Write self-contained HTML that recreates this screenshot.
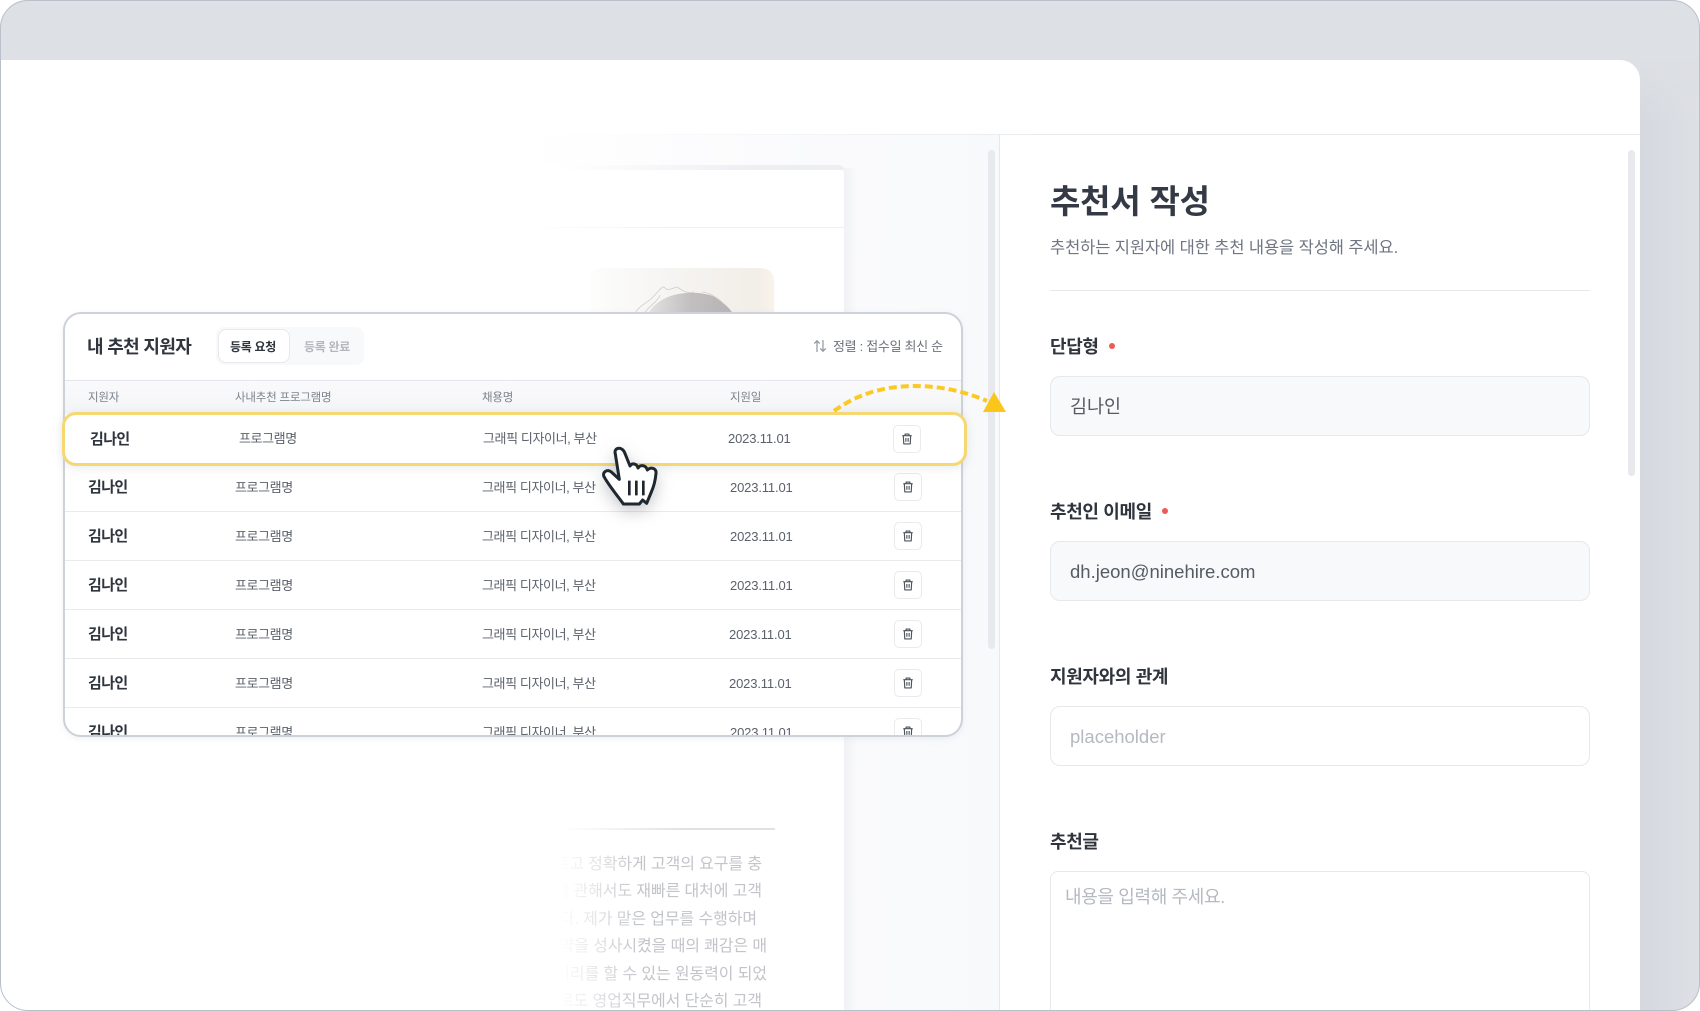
<!DOCTYPE html>
<html lang="ko">
<head>
<meta charset="utf-8">
<title>추천서 작성</title>
<style>
*{box-sizing:border-box;margin:0;padding:0}
html,body{width:1700px;height:1011px;overflow:hidden;background:#fff;font-family:"Liberation Sans","Noto Sans CJK KR",sans-serif}
#root{position:absolute;left:0;top:0;width:1700px;height:1011px;overflow:hidden}
.a{position:absolute;white-space:nowrap}
#frame{position:absolute;left:0;top:0;width:1700px;height:1011px;background:#dde0e5;border-radius:28px;overflow:hidden}
#panel{position:absolute;left:1px;top:60px;width:1639px;height:960px;background:#fff;border-top-right-radius:20px}
#strip{position:absolute;left:1640px;top:60px;width:60px;height:951px;background:linear-gradient(to right,#d5d9df,#dde0e5 60px);-webkit-mask-image:linear-gradient(to bottom,transparent 0,#000 60px);mask-image:linear-gradient(to bottom,transparent 0,#000 60px)}
#outline{position:absolute;left:0;top:0;width:1700px;height:1011px;border:1px solid #b9c0ca;border-radius:28px;z-index:50}
.t{position:absolute;white-space:nowrap;line-height:20px;height:20px}
.n{font-size:15px;font-weight:700;color:#2f343d;letter-spacing:-.6px}
.p{font-size:13px;color:#5b616b;letter-spacing:-.4px}
.d{font-size:13px;color:#5b616b;letter-spacing:-.15px}
.h{font-size:11.5px;color:#7c828c;letter-spacing:-.2px}
.line{position:absolute;left:0;width:100%;height:1px;background:#e8eaed}
.btn{position:absolute;width:28px;height:28px;background:#fff;border:1px solid #e8eaee;border-radius:5px;display:flex;align-items:center;justify-content:center}
.lab{position:absolute;left:1050px;white-space:nowrap;font-size:18px;font-weight:700;color:#2f343d;line-height:24px;letter-spacing:-.35px}
.dot{position:absolute;width:6px;height:6px;border-radius:50%;background:#ec5a55}
.inp{position:absolute;left:1050px;width:540px;height:60px;border:1px solid #e6e8ec;border-radius:10px;font-size:18.5px;line-height:60px;padding-left:19px;white-space:nowrap}
.fade{position:absolute;white-space:nowrap;font-size:16px;line-height:22px;color:#c2c4c9;text-align:right;letter-spacing:-.1px}
</style>
</head>
<body>
<svg width="0" height="0" style="position:absolute"><symbol id="tr" viewBox="0 0 16 16"><path d="M2.6 4.2h10.8M5.8 4.2V2.4h4.4v1.8M3.8 4.2l.5 9.4h7.4l.5-9.4M6.7 6.8v4.4M9.3 6.8v4.4" fill="none" stroke="#4c525c" stroke-width="1.3" stroke-linejoin="round"/></symbol></svg>
<div id="root">
<div id="frame">
<div id="strip"></div>
<div id="panel"></div>
</div>

<!-- left background -->
<div class="a" style="left:520px;top:135px;width:480px;height:876px;background:linear-gradient(to right,#fff 0,#fbfbfd 50%,#f8f9fb 100%)"></div>
<div class="a" style="left:560px;top:134px;width:1080px;height:1px;background:linear-gradient(to right,#fff,#e8eaed 45%)"></div>

<!-- faded document behind -->
<div class="a" style="left:400px;top:165px;width:444px;height:846px;background:linear-gradient(to right,rgba(255,255,255,0),#fff 120px);border-top-right-radius:12px"></div>
<div class="a" style="left:844px;top:168px;width:14px;height:843px;background:linear-gradient(to right,#f1f2f5,rgba(248,249,251,0))"></div>
<div class="a" style="left:560px;top:165px;width:284px;height:5px;background:linear-gradient(to right,#fff,#eceef2 70%);border-top-right-radius:12px"></div>
<div class="a" style="left:520px;top:227px;width:324px;height:1px;background:linear-gradient(to right,#fff,#eef0f3 50%)"></div>

<!-- photo -->
<svg class="a" style="left:590px;top:268px" width="184" height="46" viewBox="0 0 184 46">
<defs><linearGradient id="ph" x1="0" x2="1" y1="0" y2="0"><stop offset="0" stop-color="#fdfdfc"/><stop offset=".4" stop-color="#f6f5f3"/><stop offset=".9" stop-color="#f2eee8"/><stop offset="1" stop-color="#f8f4ea"/></linearGradient>
<linearGradient id="hr" x1="0" x2="1" y1="0" y2="0"><stop offset="0" stop-color="#e4e2e1"/><stop offset=".5" stop-color="#c2bfc0"/><stop offset="1" stop-color="#b6b3b3"/></linearGradient></defs>
<path d="M0 14Q0 0 14 0H170Q184 0 184 14V46H0Z" fill="url(#ph)"/>
<path d="M58 46C62 38 72 30 84 27C100 23 122 24 132 34C137 38 141 42 143 46Z" fill="url(#hr)"/>
<g fill="none" stroke="#cfcccc" stroke-width=".8"><path d="M45 46C48 38 56 36 62 30C68 24 72 18 74 19C78 24 82 20 87 19C92 22 96 26 104 24"/><path d="M54 46C58 38 68 34 70 27"/><path d="M112 24C118 24 128 30 134 36"/></g>
</svg>

<!-- lower doc -->
<div class="a" style="left:560px;top:828px;width:215px;height:2px;background:linear-gradient(to right,#fff,#dfe1e5 60%)"></div>
<div style="position:absolute;left:500px;top:852px;width:300px;height:159px;overflow:hidden;-webkit-mask-image:linear-gradient(to right,transparent 60px,#000 140px);mask-image:linear-gradient(to right,transparent 60px,#000 140px)">
<div class="fade" style="right:38px;top:2px">로 빠르고 정확하게 고객의 요구를 충</div>
<div class="fade" style="right:38px;top:29px">문제에 관해서도 재빠른 대처에 고객</div>
<div class="fade" style="right:43px;top:57px">습니다. 제가 맡은 업무를 수행하며</div>
<div class="fade" style="right:33px;top:84px">계약을 성사시켰을 때의 쾌감은 매</div>
<div class="fade" style="right:33px;top:112px">업무처리를 할 수 있는 원동력이 되었</div>
<div class="fade" style="right:38px;top:139px">앞으로도 영업직무에서 단순히 고객</div>
</div>

<!-- scrollbars -->
<div class="a" style="left:988px;top:150px;width:7px;height:499px;border-radius:4px;background:#e7e9ee"></div>
<div class="a" style="left:999px;top:135px;width:1px;height:876px;background:#e6e8ec"></div>
<div class="a" style="left:1000px;top:135px;width:640px;height:876px;background:#fff"></div>
<div class="a" style="left:1628px;top:150px;width:7px;height:326px;border-radius:4px;background:#e7e9ee"></div>

<!-- right form -->
<div class="a" style="left:1050px;top:180px;font-size:33px;font-weight:700;color:#343a45;line-height:44px;letter-spacing:-.2px">추천서 작성</div>
<div class="a" style="left:1050px;top:236px;font-size:16.5px;color:#6f7681;line-height:24px;letter-spacing:-.1px">추천하는 지원자에 대한 추천 내용을 작성해 주세요.</div>
<div class="a" style="left:1050px;top:290px;width:540px;height:1px;background:#e6e8ec"></div>

<div class="lab" style="top:335px">단답형</div><div class="dot" style="left:1109px;top:343px"></div>
<div class="inp" style="top:376px;background:#f8f9fb;color:#555b65">김나인</div>

<div class="lab" style="top:500px">추천인 이메일</div><div class="dot" style="left:1162px;top:508px"></div>
<div class="inp" style="top:541px;background:#f8f9fb;color:#555b65">dh.jeon@ninehire.com</div>

<div class="lab" style="top:665px">지원자와의 관계</div>
<div class="inp" style="top:706px;background:#fff;color:#b5b9c0">placeholder</div>

<div class="lab" style="top:830px">추천글</div>
<div class="a" style="left:1050px;top:871px;width:540px;height:170px;border:1px solid #e6e8ec;border-radius:8px;background:#fff"></div>
<div class="a" style="left:1065px;top:885px;font-size:18px;color:#b5b9c0;line-height:24px;letter-spacing:-.35px">내용을 입력해 주세요.</div>

<!-- table card -->
<div class="a" style="left:63px;top:312px;width:900px;height:425px;background:#fff;border:2px solid #cdd1d8;border-radius:18px;overflow:hidden;box-shadow:0 2px 6px rgba(200,205,215,.25)">
  <div style="position:absolute;left:0;top:66px;width:100%;height:34px;background:linear-gradient(#fafafc,#f4f5f7)"></div>
  <div class="line" style="top:66px;background:#e3e5e9"></div>
  <div class="line" style="top:197px"></div>
  <div class="line" style="top:246px"></div>
  <div class="line" style="top:295px"></div>
  <div class="line" style="top:344px"></div>
  <div class="line" style="top:393px"></div>

  <div class="t" style="left:22px;top:22px;font-size:18px;font-weight:700;color:#2f343d;line-height:22px;height:22px;letter-spacing:-.65px">내 추천 지원자</div>
  <div style="position:absolute;left:151px;top:13px;width:148px;height:38px;background:#f8f9fb;border-radius:8px"></div>
  <div style="position:absolute;left:153px;top:15px;width:72px;height:34px;background:#fff;border:1px solid #e6e8ec;border-radius:8px"></div>
  <div class="t" style="left:152px;width:72px;text-align:center;top:23px;font-size:12px;font-weight:700;color:#2f343d;letter-spacing:-.3px">등록 요청</div>
  <div class="t" style="left:226px;width:72px;text-align:center;top:23px;font-size:12px;font-weight:700;color:#b3b7be;letter-spacing:-.3px">등록 완료</div>
  <svg style="position:absolute;left:748px;top:25px" width="14" height="14" viewBox="0 0 14 14"><path d="M4 13V2M1.3 4.6 4 1.8l2.7 2.8M10 1v11M7.3 9.4 10 12.2l2.7-2.8" fill="none" stroke="#8f96a1" stroke-width="1.2"/></svg>
  <div class="t" style="left:768px;top:23px;font-size:13px;color:#6b717b;letter-spacing:-.3px">정렬 : 접수일 최신 순</div>

  <div class="t h" style="left:23px;top:74px">지원자</div>
  <div class="t h" style="left:170px;top:74px">사내추천 프로그램명</div>
  <div class="t h" style="left:417px;top:74px">채용명</div>
  <div class="t h" style="left:665px;top:74px">지원일</div>

  <!-- row 2 -->
  <div class="t n" style="left:23px;top:164px">김나인</div><div class="t p" style="left:170px;top:164px">프로그램명</div><div class="t p" style="left:417px;top:164px">그래픽 디자이너, 부산</div><div class="t d" style="left:665px;top:164px">2023.11.01</div>
  <div class="btn" style="left:829px;top:159px"><svg width="14" height="14"><use href="#tr"/></svg></div>
  <!-- row 3 -->
  <div class="t n" style="left:23px;top:213px">김나인</div><div class="t p" style="left:170px;top:213px">프로그램명</div><div class="t p" style="left:417px;top:213px">그래픽 디자이너, 부산</div><div class="t d" style="left:665px;top:213px">2023.11.01</div>
  <div class="btn" style="left:829px;top:208px"><svg width="14" height="14"><use href="#tr"/></svg></div>
  <!-- row 4 -->
  <div class="t n" style="left:23px;top:262px">김나인</div><div class="t p" style="left:170px;top:262px">프로그램명</div><div class="t p" style="left:417px;top:262px">그래픽 디자이너, 부산</div><div class="t d" style="left:665px;top:262px">2023.11.01</div>
  <div class="btn" style="left:829px;top:257px"><svg width="14" height="14"><use href="#tr"/></svg></div>
  <!-- row 5 -->
  <div class="t n" style="left:23px;top:311px">김나인</div><div class="t p" style="left:170px;top:311px">프로그램명</div><div class="t p" style="left:417px;top:311px">그래픽 디자이너, 부산</div><div class="t d" style="left:664px;top:311px">2023.11.01</div>
  <div class="btn" style="left:829px;top:306px"><svg width="14" height="14"><use href="#tr"/></svg></div>
  <!-- row 6 -->
  <div class="t n" style="left:23px;top:360px">김나인</div><div class="t p" style="left:170px;top:360px">프로그램명</div><div class="t p" style="left:417px;top:360px">그래픽 디자이너, 부산</div><div class="t d" style="left:664px;top:360px">2023.11.01</div>
  <div class="btn" style="left:829px;top:355px"><svg width="14" height="14"><use href="#tr"/></svg></div>
  <!-- row 7 -->
  <div class="t n" style="left:23px;top:409px">김나인</div><div class="t p" style="left:170px;top:409px">프로그램명</div><div class="t p" style="left:417px;top:409px">그래픽 디자이너, 부산</div><div class="t d" style="left:665px;top:409px">2023.11.01</div>
  <div class="btn" style="left:829px;top:404px"><svg width="14" height="14"><use href="#tr"/></svg></div>
</div>

<!-- highlighted row -->
<div class="a" style="left:62px;top:412px;width:905px;height:54px;background:#fff;border:3px solid #f6d873;border-radius:14px;box-shadow:0 2px 10px rgba(180,185,195,.3)"></div>
<div class="t n" style="left:90px;top:430px">김나인</div>
<div class="t p" style="left:239px;top:429px">프로그램명</div>
<div class="t p" style="left:483px;top:429px">그래픽 디자이너, 부산</div>
<div class="t d" style="left:728px;top:429px">2023.11.01</div>
<div class="btn" style="left:893px;top:425px"><svg width="14" height="14"><use href="#tr"/></svg></div>

<!-- arrow -->
<svg class="a" style="left:820px;top:375px" width="195" height="45" viewBox="820 375 195 45">
<path d="M834 411C860 392 888 386 915 386C942 386 966 392 987 401" fill="none" stroke="#fbc926" stroke-width="4" stroke-dasharray="8 4"/>
<path d="M994 392 1006 412H983Z" fill="#fbc61a"/>
</svg>

<!-- hand cursor -->
<svg class="a" style="left:580px;top:430px;filter:drop-shadow(0 6px 8px rgba(60,65,75,.28))" width="100" height="90" viewBox="0 0 300 270">
<path d="M106 72C100 52 126 48 134 68L150 108C156 98 170 100 174 114C182 102 198 106 202 120C212 110 230 114 228 130C226 152 222 168 214 186L200 220 188 210 178 222 130 222C118 204 90 172 72 140C66 126 82 116 94 126L118 148Z" fill="#fff" stroke="#1f2731" stroke-width="9" stroke-linejoin="round"/>
<path d="M148 152V196M169 152V196M190 152V196" stroke="#1f2731" stroke-width="8" fill="none"/>
</svg>
<div id="outline"></div>
</div>
</body>
</html>
